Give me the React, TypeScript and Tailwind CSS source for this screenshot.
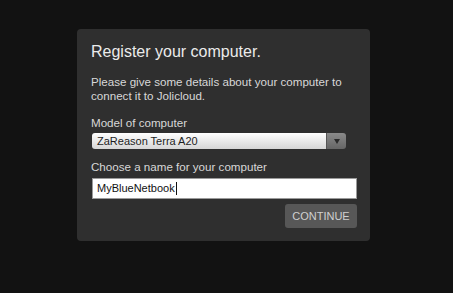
export default function App() {
  return (
    <div
      className="w-[453px] h-[293px] bg-[#121212] pt-[29px] overflow-hidden"
      style={{ fontFamily: '"Liberation Sans", Arial, sans-serif' }}
    >
      <div className="ml-[77px] w-[293px] h-[212px] rounded-[4px] bg-[#2f2f2f] pt-[13px] pl-[14px] pr-[13px]">
        <h1 className="text-[16px] leading-[20px] text-[#ebebeb]">Register your computer.</h1>

        <p className="mt-[13px] text-[11.6px] leading-[14px] text-[#d8d8d8]">
          Please give some details about your computer to
          <br />
          connect it to Jolicloud.
        </p>

        <div className="mt-[13px] text-[11.6px] leading-[14px] text-[#d8d8d8]">Model of computer</div>
        <div className="mt-[3px] ml-px flex w-[254px] h-[16px] rounded-[3px] overflow-hidden">
          <div className="flex-1 flex items-center pl-[5px] bg-gradient-to-b from-white to-[#d6d6d6] text-[11px] text-[#1e1e1e]">
            ZaReason Terra A20
          </div>
          <div className="w-[20px] flex items-center justify-center bg-gradient-to-b from-[#8a8a8a] to-[#666] border-l border-[#555]">
            <svg width="6" height="5" viewBox="0 0 6 5">
              <path d="M0 0 H6 L3 5 Z" fill="#2a2a2a" />
            </svg>
          </div>
        </div>

        <div className="mt-[11px] text-[11.6px] leading-[14px] text-[#d8d8d8]">
          Choose a name for your computer
        </div>
        <div className="mt-[4px] ml-px w-[265px] h-[21px] bg-white border border-[#9a9a9a] flex items-center pl-[4px] text-[11px] text-[#111]">
          MyBlueNetbook
          <span className="inline-block w-px h-[13px] bg-[#111] ml-px" />
        </div>

        <div className="mt-[5px] flex justify-end w-[266px]">
          <button className="w-[72px] h-[24px] rounded-[3px] bg-[#575757] text-[11px] text-[#d0d0d0]">
            CONTINUE
          </button>
        </div>
      </div>
    </div>
  );
}
